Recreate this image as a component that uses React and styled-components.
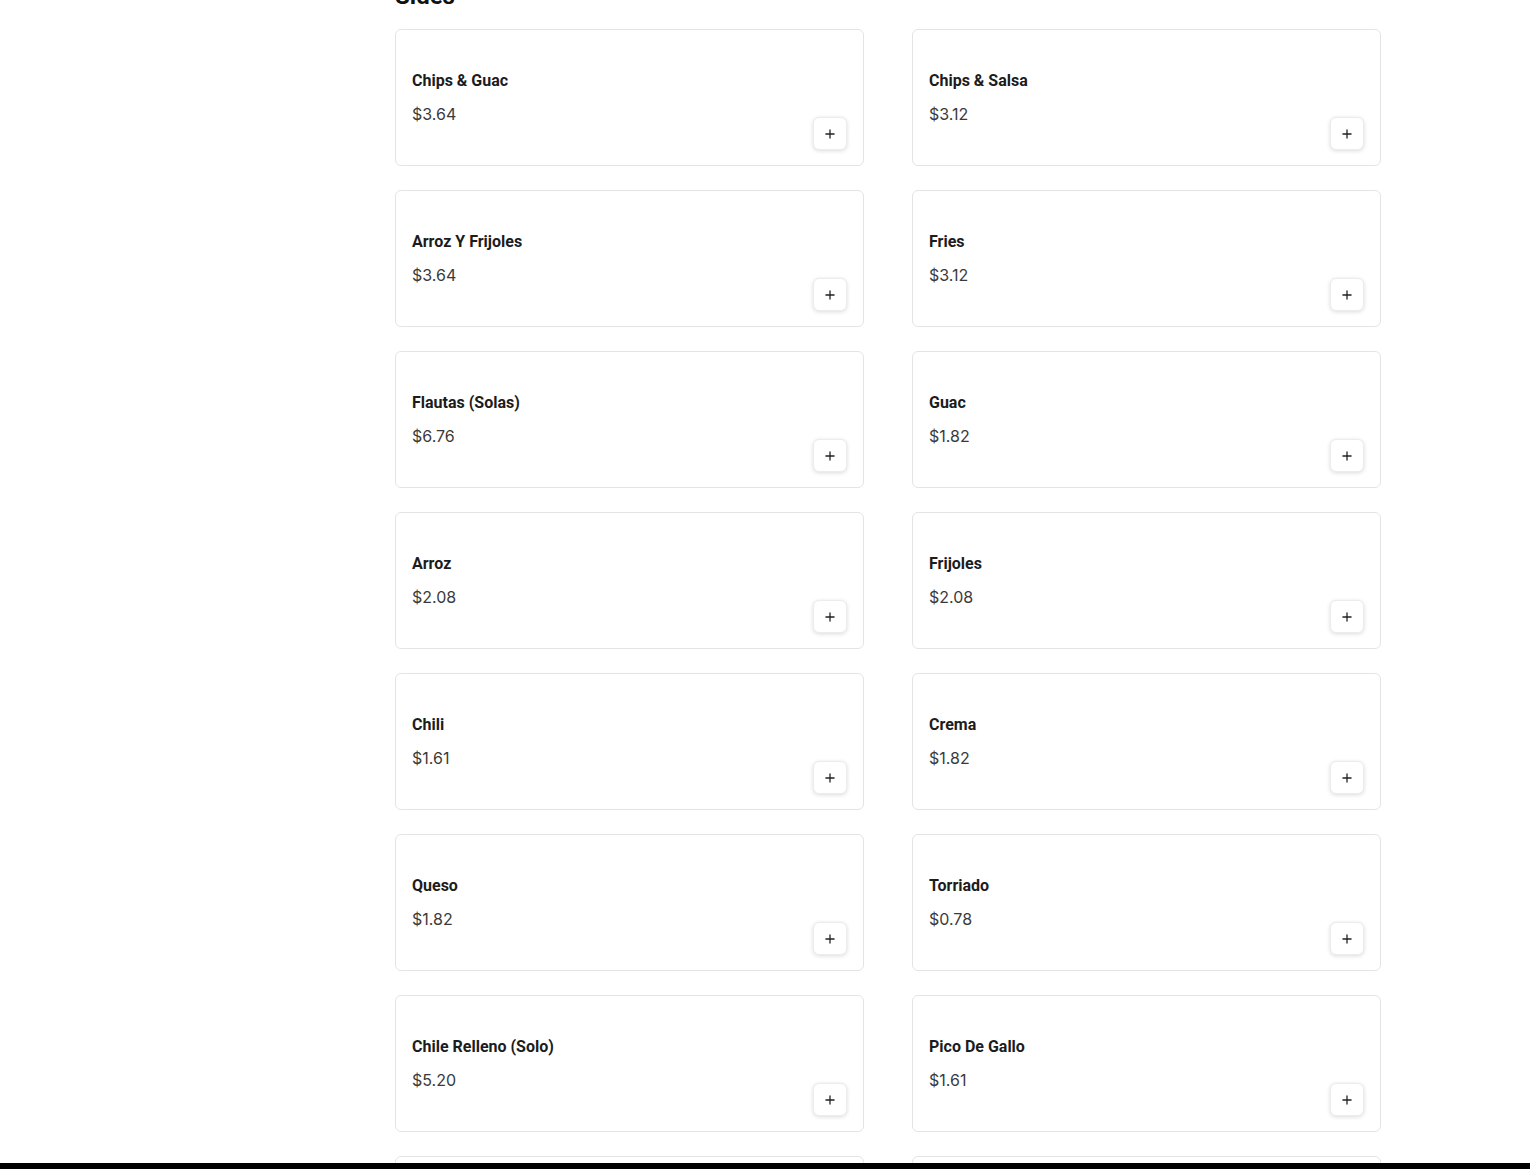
import React from 'react'
import styled, { createGlobalStyle } from 'styled-components'
import { Plus } from 'lucide-react'

const GlobalStyle = createGlobalStyle`
  html, body { margin: 0; padding: 0; background: #fff; }
  body { font-family: Roboto, "Liberation Sans", sans-serif; overflow: hidden; }
`

const sides = [
  ['Chips & Guac', '$3.64'],
  ['Chips & Salsa', '$3.12'],
  ['Arroz Y Frijoles', '$3.64'],
  ['Fries', '$3.12'],
  ['Flautas (Solas)', '$6.76'],
  ['Guac', '$1.82'],
  ['Arroz', '$2.08'],
  ['Frijoles', '$2.08'],
  ['Chili', '$1.61'],
  ['Crema', '$1.82'],
  ['Queso', '$1.82'],
  ['Torriado', '$0.78'],
  ['Chile Relleno (Solo)', '$5.20'],
  ['Pico De Gallo', '$1.61'],
  ['Horchata', '$2.60'],
  ['Tortillas', '$1.04'],
]

const Page = styled.div`
  height: 1169px;
  overflow: hidden;
`

const Main = styled.main`
  margin-left: 395px;
  width: 986px;
  padding-top: 1px;
  margin-top: -19px;
`

const Heading = styled.h2`
  margin: 0 0 19px;
  font-family: Roboto, "Liberation Sans", sans-serif;
  font-size: 24px;
  line-height: 28px;
  font-weight: 700;
  color: #111;
`

const Grid = styled.div`
  display: grid;
  grid-template-columns: 469px 469px;
  column-gap: 48px;
  row-gap: 24px;
`

const Card = styled.div`
  box-sizing: border-box;
  height: 137px;
  border: 1px solid #e4e4e4;
  border-radius: 6px;
  padding: 40px 16px 15px 16px;
  display: flex;
  justify-content: space-between;
  background: #fff;
`

const Info = styled.div`
  display: flex;
  flex-direction: column;
  align-self: flex-start;
`

const Title = styled.div`
  font-family: Roboto, "Liberation Sans", sans-serif;
  font-size: 16px;
  line-height: 22px;
  font-weight: 700;
  color: #1c1c1c;
`

const Price = styled.div`
  margin-top: 10px;
  font-family: Inter, "Open Sans", sans-serif;
  font-size: 16px;
  line-height: 24px;
  font-weight: 400;
  color: #3a3a3a;
`

const AddButton = styled.button`
  align-self: flex-end;
  width: 34px;
  height: 33px;
  padding: 0;
  border: 1px solid #ececec;
  border-radius: 6px;
  background: #fff;
  box-shadow: 0 1px 4px rgba(0, 0, 0, 0.14);
  display: flex;
  align-items: center;
  justify-content: center;
  color: #222;
  cursor: pointer;
`

const BottomBar = styled.div`
  position: fixed;
  left: 0;
  right: 0;
  bottom: 0;
  height: 6px;
  background: #000;
`

export default function App() {
  return (
    <Page>
      <GlobalStyle />
      <Main>
        <Heading>Sides</Heading>
        <Grid>
          {sides.map(([name, price]) => (
            <Card key={name}>
              <Info>
                <Title>{name}</Title>
                <Price>{price}</Price>
              </Info>
              <AddButton aria-label={`Add ${name}`}>
                <Plus size={14} strokeWidth={2.2} />
              </AddButton>
            </Card>
          ))}
        </Grid>
      </Main>
      <BottomBar />
    </Page>
  )
}
